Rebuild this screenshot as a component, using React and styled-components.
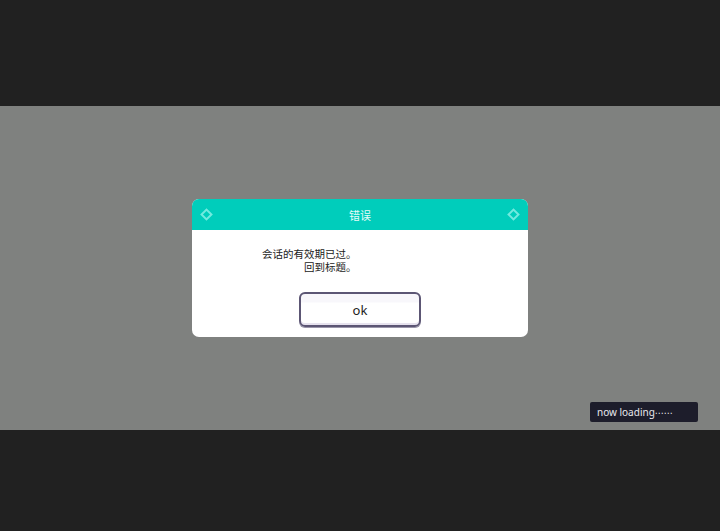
import styled, { createGlobalStyle } from "styled-components";

const GlobalStyle = createGlobalStyle`
  html, body {
    margin: 0;
    padding: 0;
    background: #212121;
    font-family: "Noto Sans", "Noto Sans CJK SC", sans-serif;
  }
`;

const Screen = styled.div`
  width: 720px;
  height: 531px;
  display: flex;
  flex-direction: column;
  background: #212121;
`;

const Letterbox = styled.div`
  height: ${(p) => p.h}px;
  flex-shrink: 0;
`;

const Stage = styled.div`
  position: relative;
  height: 324px;
  background: #7f817f;
  display: flex;
  align-items: center;
  justify-content: center;
`;

const Dialog = styled.div`
  width: 336px;
  height: 138px;
  background: #ffffff;
  border-radius: 7px;
  overflow: hidden;
  display: flex;
  flex-direction: column;
`;

const Header = styled.div`
  height: 31px;
  background: #00cdbb;
  display: flex;
  align-items: center;
  justify-content: space-between;
  padding: 0 10px;
  color: #e6fbf8;
  font-size: 11px;
`;

const Diamond = styled.span`
  width: 5px;
  height: 5px;
  border: 2px solid #72eadf;
  transform: rotate(45deg);
  display: block;
`;

const Body = styled.div`
  flex: 1;
  display: flex;
  flex-direction: column;
  align-items: center;
  padding-top: 18px;
`;

const Message = styled.div`
  align-self: flex-start;
  margin-left: 70px;
  font-size: 10.5px;
  line-height: 13px;
  color: #222;
`;

const Line = styled.div`
  padding-left: ${(p) => p.indent || 0}px;
`;

const OkButton = styled.button`
  margin-top: 18px;
  width: 122px;
  height: 35px;
  box-sizing: border-box;
  border: 2px solid #5c5674;
  border-radius: 6px;
  background: linear-gradient(#f8f7fb 0, #f8f7fb 8px, #ffffff 9px);
  box-shadow: inset 0 -2px 0 #e6e2ee, 0 1px 0 #9a96aa;
  font-family: "Noto Sans", sans-serif;
  font-size: 13px;
  color: #222;
  padding: 0;
`;

const Loading = styled.div`
  position: absolute;
  right: 22px;
  bottom: 8px;
  width: 108px;
  height: 20px;
  box-sizing: border-box;
  padding-left: 7px;
  background: #1d1d2b;
  border-radius: 2px;
  color: #e8e8ee;
  font-size: 10px;
  line-height: 20px;
`;

const Dots = styled.span`
  font-family: "DejaVu Sans", sans-serif;
  font-size: 9px;
`;

export default function App() {
  return (
    <Screen>
      <GlobalStyle />
      <Letterbox h={106} />
      <Stage>
        <Dialog>
          <Header>
            <Diamond />
            <span>错误</span>
            <Diamond />
          </Header>
          <Body>
            <Message>
              <Line>会话的有效期已过。</Line>
              <Line indent={42}>回到标题。</Line>
            </Message>
            <OkButton>ok</OkButton>
          </Body>
        </Dialog>
        <Loading>
          now loading<Dots>⋯⋯</Dots>
        </Loading>
      </Stage>
      <Letterbox h={101} />
    </Screen>
  );
}
